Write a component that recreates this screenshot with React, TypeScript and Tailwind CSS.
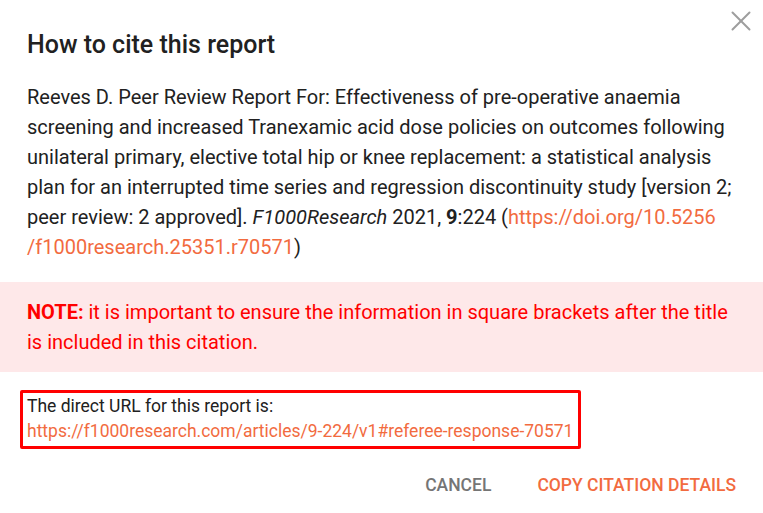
import { X } from 'lucide-react';

export default function App() {
  return (
    <div className="relative w-[763px] h-[513px] bg-white overflow-hidden font-['Roboto',sans-serif] text-[#212121]">
      <button className="absolute left-[724px] top-[4px] w-[34px] h-[34px] flex items-center justify-center text-[#9e9e9e]">
        <X className="w-[34px] h-[34px]" strokeWidth={1.4} />
      </button>

      <div className="pl-[27px] pr-[20px] pt-[31px]">
        <h2 className="text-[25px] leading-[28px] font-medium">How to cite this report</h2>
        <p className="mt-[23px] text-[20px] leading-[30px]">
          Reeves D. Peer Review Report For: Effectiveness of pre-operative anaemia screening and increased Tranexamic acid dose policies on outcomes following unilateral primary, elective total hip or knee replacement: a statistical analysis plan for an interrupted time series and regression discontinuity study [version 2; peer review: 2 approved]. <i>F1000Research</i> 2021, <b className="font-bold">9</b>:224 (
          <a className="text-[#f26b3f]">https://doi.org/10.5256 /f1000research.25351.r70571</a>)
        </p>
      </div>

      <div className="mt-[20px] bg-[#fee8e9] pl-[27px] pr-[20px] py-[15px] text-[20px] leading-[30px] text-[#ff0000]">
        <b className="font-bold">NOTE:</b> it is important to ensure the information in square brackets after the title is included in this citation.
      </div>

      <div className="mt-[18px] ml-[20px] w-[561px] border-[3px] border-[#ff0000] rounded-[2px] pl-[4px] pt-[1px] pb-[2px] text-[17.5px] leading-[25px]">
        <div>The direct URL for this report is:</div>
        <a className="text-[#f26b3f]">https://f1000research.com/articles/9-224/v1#referee-response-70571</a>
      </div>

      <div className="flex justify-end items-center gap-[46px] pr-[27px] mt-[24px] text-[17.5px] leading-[24px] font-medium">
        <button className="uppercase text-[#757575]">Cancel</button>
        <button className="uppercase text-[#f26b3f]">Copy citation details</button>
      </div>
    </div>
  );
}
